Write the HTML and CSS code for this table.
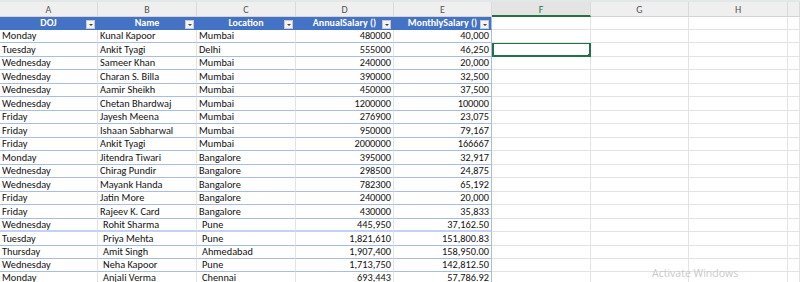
FILE: index.html
```html
<!DOCTYPE html>
<html>
<head>
    <title>Employee Salaries</title>
    <link rel="stylesheet" href="styles.css">
</head>
<body>
    <div class="sheet">
        <div class="topbar"></div>

        <!-- column letters -->
        <div class="row colhead">
            <div>A</div><div>B</div><div>C</div><div>D</div><div>E</div>
            <div class="active">F</div><div>G</div><div>H</div><div></div>
        </div>

        <!-- table header -->
        <div class="row">
            <div class="th">DOJ<span class="filter"></span></div>
            <div class="th">Name<span class="filter"></span></div>
            <div class="th">Location<span class="filter"></span></div>
            <div class="th">AnnualSalary ()<span class="filter"></span></div>
            <div class="th last">MonthlySalary ()<span class="filter"></span></div>
            <div></div><div></div><div></div><div></div>
        </div>

        <div class="row odd">
            <div class="td">Monday</div><div class="td">Kunal Kapoor</div><div class="td">Mumbai</div>
            <div class="td num">480000</div><div class="td num last">40,000</div>
            <div></div><div></div><div></div><div></div>
        </div>
        <div class="row even">
            <div class="td">Tuesday</div><div class="td">Ankit Tyagi</div><div class="td">Delhi</div>
            <div class="td num">555000</div><div class="td num last">46,250</div>
            <div class="selected"></div><div></div><div></div><div></div>
        </div>
        <div class="row odd">
            <div class="td">Wednesday</div><div class="td">Sameer Khan</div><div class="td">Mumbai</div>
            <div class="td num">240000</div><div class="td num last">20,000</div>
            <div></div><div></div><div></div><div></div>
        </div>
        <div class="row even">
            <div class="td">Wednesday</div><div class="td">Charan S. Billa</div><div class="td">Mumbai</div>
            <div class="td num">390000</div><div class="td num last">32,500</div>
            <div></div><div></div><div></div><div></div>
        </div>
        <div class="row odd">
            <div class="td">Wednesday</div><div class="td">Aamir Sheikh</div><div class="td">Mumbai</div>
            <div class="td num">450000</div><div class="td num last">37,500</div>
            <div></div><div></div><div></div><div></div>
        </div>
        <div class="row even">
            <div class="td">Wednesday</div><div class="td">Chetan Bhardwaj</div><div class="td">Mumbai</div>
            <div class="td num">1200000</div><div class="td num last">100000</div>
            <div></div><div></div><div></div><div></div>
        </div>
        <div class="row odd">
            <div class="td">Friday</div><div class="td">Jayesh Meena</div><div class="td">Mumbai</div>
            <div class="td num">276900</div><div class="td num last">23,075</div>
            <div></div><div></div><div></div><div></div>
        </div>
        <div class="row even">
            <div class="td">Friday</div><div class="td">Ishaan Sabharwal</div><div class="td">Mumbai</div>
            <div class="td num">950000</div><div class="td num last">79,167</div>
            <div></div><div></div><div></div><div></div>
        </div>
        <div class="row odd">
            <div class="td">Friday</div><div class="td">Ankit Tyagi</div><div class="td">Mumbai</div>
            <div class="td num">2000000</div><div class="td num last">166667</div>
            <div></div><div></div><div></div><div></div>
        </div>
        <div class="row even">
            <div class="td">Monday</div><div class="td">Jitendra Tiwari</div><div class="td">Bangalore</div>
            <div class="td num">395000</div><div class="td num last">32,917</div>
            <div></div><div></div><div></div><div></div>
        </div>
        <div class="row odd">
            <div class="td">Wednesday</div><div class="td">Chirag Pundir</div><div class="td">Bangalore</div>
            <div class="td num">298500</div><div class="td num last">24,875</div>
            <div></div><div></div><div></div><div></div>
        </div>
        <div class="row even">
            <div class="td">Wednesday</div><div class="td">Mayank Handa</div><div class="td">Bangalore</div>
            <div class="td num">782300</div><div class="td num last">65,192</div>
            <div></div><div></div><div></div><div></div>
        </div>
        <div class="row odd">
            <div class="td">Friday</div><div class="td">Jatin More</div><div class="td">Bangalore</div>
            <div class="td num">240000</div><div class="td num last">20,000</div>
            <div></div><div></div><div></div><div></div>
        </div>
        <div class="row even">
            <div class="td">Friday</div><div class="td">Rajeev K. Card</div><div class="td">Bangalore</div>
            <div class="td num">430000</div><div class="td num last">35,833</div>
            <div></div><div></div><div></div><div></div>
        </div>
        <div class="row odd split">
            <div class="td">Wednesday</div><div class="td indent">Rohit Sharma</div><div class="td indent">Pune</div>
            <div class="td num">445,950</div><div class="td num last">37,162.50</div>
            <div></div><div></div><div></div><div></div>
        </div>
        <div class="row even">
            <div class="td">Tuesday</div><div class="td indent">Priya Mehta</div><div class="td indent">Pune</div>
            <div class="td num">1,821,610</div><div class="td num last">151,800.83</div>
            <div></div><div></div><div></div><div></div>
        </div>
        <div class="row odd">
            <div class="td">Thursday</div><div class="td indent">Amit Singh</div><div class="td indent">Ahmedabad</div>
            <div class="td num">1,907,400</div><div class="td num last">158,950.00</div>
            <div></div><div></div><div></div><div></div>
        </div>
        <div class="row odd">
            <div class="td">Wednesday</div><div class="td indent">Neha Kapoor</div><div class="td indent">Pune</div>
            <div class="td num">1,713,750</div><div class="td num last">142,812.50</div>
            <div></div><div></div><div></div><div></div>
        </div>
        <div class="row odd">
            <div class="td">Monday</div><div class="td indent">Anjali Verma</div><div class="td indent">Chennai</div>
            <div class="td num">693,443</div><div class="td num last">57,786.92</div>
            <div></div><div></div><div></div><div></div>
        </div>

        <div class="watermark">Activate Windows</div>
    </div>
</body>
</html>
```

FILE: styles.css
```css
:root {
    --grid: #e3e3e3;
    --table-blue: #4472c4;
    --table-line: #a9bde3;
    --excel-green: #217346;
}

body {
    margin: 0;
    background: #fff;
    font-family: Carlito, Lato, 'Liberation Sans', sans-serif;
    font-size: 10.3px;
    color: #111;
    overflow: hidden;
}

.sheet {
    position: relative;
    width: 800px;
    height: 282px;
    overflow: hidden;
}

.topbar {
    height: 2px;
    background: #e2e7e7;
}

.row {
    display: grid;
    grid-template-columns: 98px 99px 99px 98px 98px 99px 98px 99px 1fr;
    height: 13px;
}

.row.even {
    height: 14px;
}

.row > div {
    box-sizing: border-box;
    border-right: 1px solid var(--grid);
    border-bottom: 1px solid var(--grid);
    white-space: nowrap;
    overflow: hidden;
    line-height: 12px;
}

.row.even > div {
    line-height: 13px;
}

/* column letters */
.colhead {
    height: 15px;
    background: #efefef;
}

.colhead > div {
    text-align: center;
    color: #555;
    font-size: 10px;
    line-height: 15px !important;
    border-right-color: #dadada;
    border-bottom-color: #d4d4d4;
}

.colhead > div.active {
    background: #e4e4e4;
    color: var(--excel-green);
    border-bottom: 2px solid var(--excel-green);
}

/* table header */
.row > .th {
    position: relative;
    background: var(--table-blue);
    color: #fff;
    font-size: 10px;
    font-weight: 700;
    text-align: center;
    border-right-color: var(--table-blue);
    border-bottom-color: var(--table-blue);
}

.filter {
    position: absolute;
    right: 2px;
    top: 3px;
    width: 7px;
    height: 7px;
    background: #f3f3f3;
    border: 1px solid #c9c9c9;
}

.filter::after {
    content: '';
    position: absolute;
    left: 2px;
    top: 3px;
    border-left: 2px solid transparent;
    border-right: 2px solid transparent;
    border-top: 2px solid #444;
}

/* table body */
.row > .td {
    padding-left: 2px;
    border-bottom-color: var(--table-line);
}

.row > .td.num {
    text-align: right;
    padding-left: 0;
    padding-right: 2px;
}

.row > .td.indent {
    padding-left: 5px;
}

.row > .last {
    border-right-color: var(--table-line);
}

.row.split > .td {
    border-bottom: 2px solid #c3d2ee;
}

/* active cell */
.row > .selected {
    position: relative;
    border: 2px solid var(--excel-green);
    border-top-width: 1px;
}

.selected::after {
    content: '';
    position: absolute;
    right: -3px;
    bottom: -3px;
    width: 3px;
    height: 3px;
    background: var(--excel-green);
    border: 1px solid #fff;
}

.watermark {
    position: absolute;
    left: 652px;
    top: 266px;
    font-family: 'Open Sans', sans-serif;
    font-size: 10.5px;
    color: #c9c9c9;
}
```
